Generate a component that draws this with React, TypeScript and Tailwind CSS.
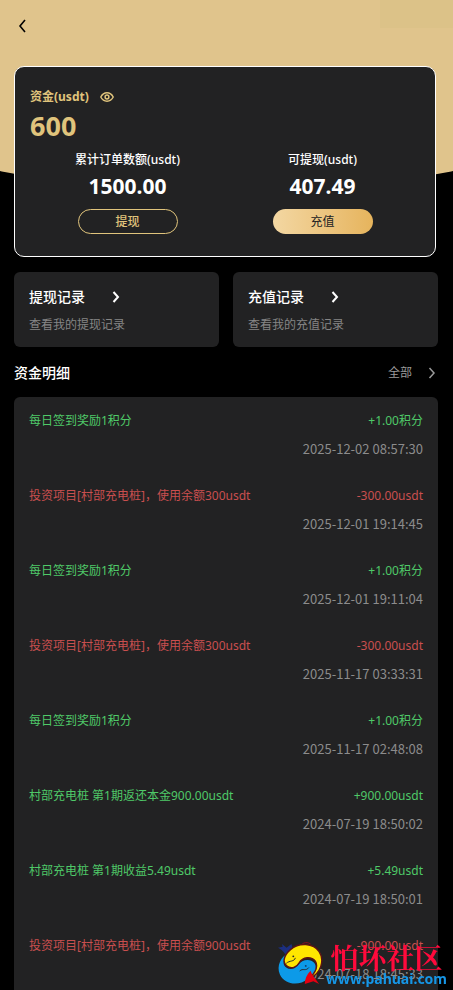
import { useState } from "react";

type Entry = {
  id: number;
  title: string;
  amount: string;
  time: string;
  income: boolean;
};

const entries: Entry[] = [
  { id: 1, title: "每日签到奖励1积分", amount: "+1.00积分", time: "2025-12-02 08:57:30", income: true },
  { id: 2, title: "投资项目[村部充电桩]，使用余额300usdt", amount: "-300.00usdt", time: "2025-12-01 19:14:45", income: false },
  { id: 3, title: "每日签到奖励1积分", amount: "+1.00积分", time: "2025-12-01 19:11:04", income: true },
  { id: 4, title: "投资项目[村部充电桩]，使用余额300usdt", amount: "-300.00usdt", time: "2025-11-17 03:33:31", income: false },
  { id: 5, title: "每日签到奖励1积分", amount: "+1.00积分", time: "2025-11-17 02:48:08", income: true },
  { id: 6, title: "村部充电桩 第1期返还本金900.00usdt", amount: "+900.00usdt", time: "2024-07-19 18:50:02", income: true },
  { id: 7, title: "村部充电桩 第1期收益5.49usdt", amount: "+5.49usdt", time: "2024-07-19 18:50:01", income: true },
  { id: 8, title: "投资项目[村部充电桩]，使用余额900usdt", amount: "-900.00usdt", time: "2024-07-18 18:45:33", income: false },
];

const Arrow = ({ className }: { className: string }) => (
  <svg viewBox="0 0 8 12" className={className} fill="none" stroke="currentColor">
    <path d="M1.5 1 6 6 1.5 11" />
  </svg>
);

const EyeIcon = () => (
  <svg viewBox="0 0 14 10" className="h-[10px] w-[14px]" fill="none" stroke="currentColor" strokeWidth="1.5">
    <path d="M.8 5C2.2 2.3 4.4.8 7 .8S11.8 2.3 13.2 5C11.8 7.7 9.6 9.2 7 9.2S2.2 7.7.8 5Z" />
    <circle cx="7" cy="5" r="1.9" />
  </svg>
);

const RecordLink = ({ title, note }: { title: string; note: string }) => (
  <a href="#" className="block h-[75px] rounded-md bg-[#222223] px-[15px] pt-[15px]">
    <span className="flex items-center text-sm leading-5 font-medium text-white">
      {title}
      <Arrow className="ml-[27px] h-3 w-2 stroke-2" />
    </span>
    <span className="mt-[9px] block text-xs leading-[18px] text-[#858585]">{note}</span>
  </a>
);

const Watermark = () => (
  <div className="pointer-events-none fixed right-[6px] bottom-1 flex items-center">
    <svg viewBox="0 0 50 46" className="mr-[2px] h-[44px] w-[48px]">
      <path d="M11 15C8 10 6 8 2 6l5-1-1-3 5 4 5-4c2 5 1 8-2 12Z" fill="#1c2f80" />
      <path d="M24 6C27 1 31-1 36 2" fill="none" stroke="#8f1020" />
      <path d="M14 11C5 15 0 25 4 34c5 11 20 12 29 5 7-5 11-12 7-17-4-5-13-4-17 2-4 5-9 5-12 3-5-3-4-10 3-16Z" fill="#0c9ae8" />
      <path d="M35 38C47 33 51 19 45 10 39 1 24 0 15 8 7 15 7 22 11 25c5 4 11 1 13-3 4-7 13-7 17-2 3 5 0 12-6 18Z" fill="#ffe600" stroke="#5c1414" strokeWidth="1.5" />
      <path d="M36 30c2 6 6 9 9 14l-6-3-9 3c0-5 2-10 6-14Z" fill="#e60012" />
      <path d="M11 22c3-3 8-1 9-5M25 30c3-3 6 1 9-3" fill="none" stroke="#26262a" strokeLinecap="round" />
      <circle cx="18" cy="15" r="1" fill="#26262a" />
      <circle cx="31" cy="25" r="1" fill="#123a6b" />
    </svg>
    <div>
      <div className="text-center font-['Noto_Serif_CJK_SC','Liberation_Serif',serif] text-[28px] leading-[30px] font-bold text-[#ff0a3c]">怕坏社区</div>
      <div className="text-sm leading-[14px] font-bold text-[#1696e6]">www.pahuai.com</div>
    </div>
  </div>
);

const App = () => {
  const [visible, setVisible] = useState<boolean>(true);

  const show = (value: string) => (visible ? value : "****");

  return (
    <div className="relative flex h-screen flex-col overflow-hidden bg-black pr-[15px] pl-[14px] font-['Noto_Sans','Noto_Sans_CJK_SC',sans-serif]">
      <div className="absolute top-0 -left-[20%] h-[189px] w-[140%] rounded-b-[50%_60px] bg-[#e0c48c]" />
      <div className="absolute top-0 right-0 h-7 w-[73px] bg-[#dcc288]" />

      <header className="relative flex h-[66px] shrink-0 items-start pt-[19px]">
        <button type="button" aria-label="返回" className="ml-1 text-black">
          <svg viewBox="0 0 8 14" className="h-[14px] w-2" fill="none" stroke="currentColor" strokeWidth="1.6">
            <path d="M7 1 2 7l5 6" />
          </svg>
        </button>
      </header>

      <section className="relative mr-[2px] h-[191px] shrink-0 rounded-[10px] border border-white bg-[#222223] px-[15px] pt-[21px]">
        <div className="flex items-center text-xs leading-[18px] font-bold text-[#e0c47c]">
          资金(usdt)
          <button type="button" aria-label="显示或隐藏金额" className="ml-[11px]" onClick={() => setVisible(!visible)}>
            <EyeIcon />
          </button>
        </div>
        <div className="mt-[3px] text-[27px] leading-[34px] font-bold text-[#e0c47c]">{show("600")}</div>
        <div className="mt-[9px] grid grid-cols-2 text-center text-white">
          <div>
            <div className="text-xs leading-[16px] font-medium">累计订单数额(usdt)</div>
            <div className="mt-[3px] text-[21px] leading-[30px] font-bold">{show("1500.00")}</div>
            <button type="button" className="mt-2 h-[25px] w-[100px] rounded-full border border-[#e0c47c] text-xs font-medium text-[#e0c47c]">
              提现
            </button>
          </div>
          <div>
            <div className="text-xs leading-[16px] font-medium">可提现(usdt)</div>
            <div className="mt-[3px] text-[21px] leading-[30px] font-bold">{show("407.49")}</div>
            <button type="button" className="mt-2 h-[25px] w-[100px] rounded-full bg-linear-to-r from-[#f3d7a2] to-[#e6b45c] text-xs text-[#222223]">
              充值
            </button>
          </div>
        </div>
      </section>

      <nav className="mt-[15px] grid shrink-0 grid-cols-2 gap-[14px]">
        <RecordLink title="提现记录" note="查看我的提现记录" />
        <RecordLink title="充值记录" note="查看我的充值记录" />
      </nav>

      <div className="flex h-[50px] shrink-0 items-center justify-between pt-[2px]">
        <h2 className="text-sm font-medium text-white">资金明细</h2>
        <a href="#" className="flex items-center text-xs text-[#9a9a9a]">
          全部
          <Arrow className="mr-[2px] ml-4 h-3 w-2 stroke-[1.5]" />
        </a>
      </div>

      <ul className="min-h-0 flex-1 overflow-hidden rounded-t-md bg-[#222223] px-[15px]">
        {entries.map(entry => (
          <li key={entry.id} className="h-[75px] pt-[15px] text-xs leading-[18px]">
            <div className={entry.income ? "flex justify-between text-[#4fc968]" : "flex justify-between text-[#c94f4f]"}>
              <span>{entry.title}</span>
              <span>{entry.amount}</span>
            </div>
            <div className="mt-[10px] text-right font-['Noto_Sans_CJK_SC',sans-serif] text-[13px] text-[#8c8c8c]">{entry.time}</div>
          </li>
        ))}
      </ul>

      <Watermark />
    </div>
  );
};

export default App;
